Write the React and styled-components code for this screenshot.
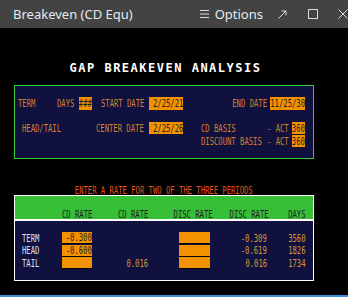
import React from 'react';
import styled, { createGlobalStyle } from 'styled-components';

const Global = createGlobalStyle`
  html, body { margin: 0; padding: 0; background: #000; }
  #root { width: 348px; height: 297px; }
`;

const Window = styled.div`
  width: 348px;
  height: 297px;
  display: flex;
  flex-direction: column;
  background: #000;
  overflow: hidden;
`;

const TitleBar = styled.div`
  flex: 0 0 28px;
  height: 28px;
  background: #434343;
  display: flex;
  align-items: center;
  padding-left: 13px;
  color: #e4eaf0;
  font-family: "Noto Sans", sans-serif;
  font-size: 13px;
`;

const Title = styled.div`
  flex: 1;
  white-space: nowrap;
`;

const Options = styled.div`
  display: flex;
  align-items: center;
  gap: 6px;
  margin-right: 15px;
`;

const WinIcon = styled.svg`
  display: block;
  flex: none;
  margin-right: ${p => p.$mr || 0}px;
`;

const Screen = styled.div`
  flex: 1;
  display: flex;
  flex-direction: column;
  padding-left: 14px;
`;

const Heading = styled.div`
  width: 300px;
  box-sizing: border-box;
  margin-top: 34px;
  height: 12px;
  line-height: 12px;
  padding-left: 3px;
  text-align: center;
  font-family: "DejaVu Sans Mono", monospace;
  font-weight: bold;
  font-size: 12px;
  letter-spacing: 1.5px;
  color: #fff;
  white-space: pre;
`;

const Panel = styled.div`
  width: 300px;
  height: ${p => p.$h}px;
  box-sizing: border-box;
  border: 1px solid ${p => p.$border};
  background: #111140;
  display: flex;
  flex-direction: column;
  margin-top: ${p => p.$mt || 0}px;
  flex: none;
`;

const Row = styled.div`
  display: flex;
  align-items: center;
  height: ${p => p.$h}px;
  margin-top: ${p => p.$mt || 0}px;
  flex: none;
`;

const Cell = styled.div`
  flex: 0 0 ${p => p.$w}px;
  width: ${p => p.$w}px;
  height: 100%;
  box-sizing: border-box;
  display: flex;
  justify-content: ${p => p.$j || 'flex-start'};
  align-items: ${p => p.$a || 'center'};
  padding-left: ${p => p.$pl || 0}px;
  padding-right: ${p => p.$pr || 0}px;
`;

const Txt = styled.span`
  display: inline-block;
  flex: none;
  white-space: pre;
  font-family: "DejaVu Sans Mono", monospace;
  font-size: 11px;
  line-height: ${p => p.$lh || 11}px;
  color: ${p => p.$c || '#d0802a'};
  transform: scaleX(0.655);
  transform-origin: ${p => p.$o || 'left'} center;
`;

const Field = styled.div`
  flex: 0 0 ${p => p.$w}px;
  width: ${p => p.$w}px;
  height: ${p => p.$h}px;
  box-sizing: border-box;
  background: #f39200;
  display: flex;
  align-items: center;
  justify-content: flex-end;
  border-bottom: ${p => (p.$shadow ? '1px solid #050505' : 'none')};
`;

const Notice = styled.div`
  width: 300px;
  height: 9px;
  margin-top: 27px;
  display: flex;
  justify-content: center;
  align-items: center;
  flex: none;
`;

const GridHeader = styled.div`
  flex: 0 0 23px;
  height: 23px;
  background: #36bf36;
  border-bottom: 2px solid #fff;
  display: flex;
  align-items: flex-end;
`;

const GridBody = styled.div`
  flex: 1;
  display: flex;
  flex-direction: column;
  padding-top: 11px;
  gap: 0.5px;
`;

const BottomLine = styled.div`
  flex: 0 0 2px;
  height: 2px;
  background: #3a8ed8;
`;

const LABEL = '#d0802a';
const DARK = '#1e1e1e';
const LIGHT = '#d8e0f8';
const VALUE = '#d89a30';

const T = ({ children, c = LABEL, o = 'left', lh }) => (
  <Txt $c={c} $o={o} $lh={lh}>{children}</Txt>
);

const rows = [
  { label: 'TERM', cd: '-0.300', cd2: '', disc: '-0.309', days: '3560' },
  { label: 'HEAD', cd: '-0.600', cd2: '', disc: '-0.619', days: '1826' },
  { label: 'TAIL', cd: '', cd2: '0.016', disc: '0.016', days: '1734' },
];

export default function App() {
  return (
    <Window>
      <Global />
      <TitleBar>
        <Title>Breakeven (CD Equ)</Title>
        <Options>
          <WinIcon width="9" height="8" viewBox="0 0 9 8">
            <path d="M0 0.5H9M0 4H9M0 7.5H9" stroke="#dcdcdc" strokeWidth="1" />
          </WinIcon>
          <span>Options</span>
        </Options>
        <WinIcon width="9" height="9" viewBox="0 0 9 9" $mr={21}>
          <path d="M0.5 8.5L8 1M3.5 1H8V5.5" stroke="#dcdcdc" strokeWidth="1" fill="none" />
        </WinIcon>
        <WinIcon width="10" height="10" viewBox="0 0 10 10" $mr={20}>
          <rect x="0.5" y="0.5" width="9" height="9" stroke="#dcdcdc" strokeWidth="1" fill="none" />
        </WinIcon>
        <WinIcon width="10" height="10" viewBox="0 0 10 10">
          <path d="M0.5 0.5L9.5 9.5M9.5 0.5L0.5 9.5" stroke="#dcdcdc" strokeWidth="1" fill="none" />
        </WinIcon>
      </TitleBar>

      <Screen>
        <Heading>GAP BREAKEVEN ANALYSIS</Heading>

        <Panel $h={74} $border="#33cc33" $mt={11}>
          <Row $h={13} $mt={11}>
            <Cell $w={42} $pl={3}><T>TERM</T></Cell>
            <Cell $w={22}><T>DAYS</T></Cell>
            <Field $w={13} $h={13}><T c={DARK} o="right">###</T></Field>
            <Cell $w={57} $pl={9}><T>START DATE</T></Cell>
            <Field $w={34} $h={13}><T c={DARK} o="right">2/25/21</T></Field>
            <Cell $w={87} $j="flex-end" $pr={3}><T o="right">END DATE</T></Cell>
            <Field $w={35} $h={13}><T c={DARK} o="right">11/25/30</T></Field>
          </Row>
          <Row $h={12} $mt={12}>
            <Cell $w={81} $pl={7}><T>HEAD/TAIL</T></Cell>
            <Cell $w={53}><T>CENTER DATE</T></Cell>
            <Field $w={34} $h={12}><T c={DARK} o="right">2/25/26</T></Field>
            <Cell $w={84} $pl={18}><T>CD BASIS</T></Cell>
            <Cell $w={25}><T>- ACT</T></Cell>
            <Field $w={13} $h={12}><T c={DARK} o="right">360</T></Field>
          </Row>
          <Row $h={12} $mt={1}>
            <Cell $w={252} $pl={186}><T>DISCOUNT BASIS</T></Cell>
            <Cell $w={25}><T>- ACT</T></Cell>
            <Field $w={13} $h={12}><T c={DARK} o="right">360</T></Field>
          </Row>
        </Panel>

        <Notice>
          <T c="#e8501c" o="center" lh={9}>ENTER A RATE FOR TWO OF THE THREE PERIODS</T>
        </Notice>

        <Panel $h={86} $border="#ffffff">
          <GridHeader>
            <Cell $w={77} $j="flex-end" $a="flex-end"><T c={DARK} o="right" lh={9}>CD RATE</T></Cell>
            <Cell $w={56} $j="flex-end" $a="flex-end"><T c={DARK} o="right" lh={9}>CD RATE</T></Cell>
            <Cell $w={65} $j="flex-end" $a="flex-end"><T c={DARK} o="right" lh={9}>DISC RATE</T></Cell>
            <Cell $w={56} $j="flex-end" $a="flex-end"><T c={DARK} o="right" lh={9}>DISC RATE</T></Cell>
            <Cell $w={36} $j="flex-end" $a="flex-end"><T c={DARK} o="right" lh={9}>DAYS</T></Cell>
          </GridHeader>
          <GridBody>
            {rows.map(r => (
              <Row key={r.label} $h={12}>
                <Cell $w={47} $pl={7}><T c={LIGHT}>{r.label}</T></Cell>
                <Field $w={30} $h={12} $shadow><T c={DARK} o="right">{r.cd}</T></Field>
                <Cell $w={56} $j="flex-end"><T c={VALUE} o="right">{r.cd2}</T></Cell>
                <Cell $w={31} />
                <Field $w={31} $h={12} $shadow />
                <Cell $w={57} $j="flex-end"><T c={VALUE} o="right">{r.disc}</T></Cell>
                <Cell $w={38} $j="flex-end"><T c={VALUE} o="right">{r.days}</T></Cell>
              </Row>
            ))}
          </GridBody>
        </Panel>
      </Screen>
      <BottomLine />
    </Window>
  );
}
